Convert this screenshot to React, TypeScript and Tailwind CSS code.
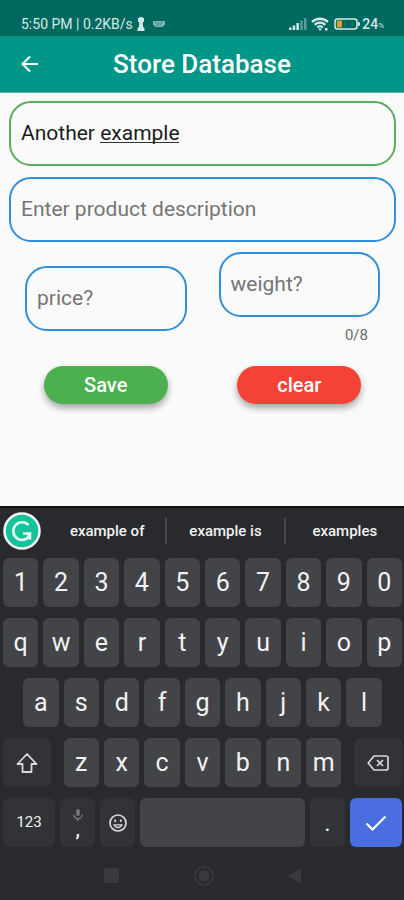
import { useState } from "react";
import clsx from "clsx";

const digits = ["1", "2", "3", "4", "5", "6", "7", "8", "9", "0"];
const topRow = ["q", "w", "e", "r", "t", "y", "u", "i", "o", "p"];
const homeRow = ["a", "s", "d", "f", "g", "h", "j", "k", "l"];
const bottomRow = ["z", "x", "c", "v", "b", "n", "m"];
const suggestions = ["example of", "example is", "examples"];

export default function App() {
  const [name, setName] = useState("Another example");

  return (
    <div className="flex min-h-screen flex-col bg-[#fafafa] font-['Roboto',sans-serif]">
      <StatusBar />

      <header className="grid h-[57px] grid-cols-[40px_1fr_40px] items-center border-b border-[#4fb3a7] bg-[#009688] px-[10px] text-white">
        <button type="button" aria-label="Back" className="flex h-10 w-10 items-center justify-center">
          <svg className="h-5 w-5" viewBox="0 0 20 20" fill="none" stroke="currentColor" strokeWidth="2">
            <path d="M18 10H3M10 2.5L2.5 10l7.5 7.5" />
          </svg>
        </button>
        <h1 className="text-center text-[26px] leading-8 font-medium">Store Database</h1>
      </header>

      <main className="flex-1 pt-2 pr-2 pl-[9px]">
        <form className="flex flex-col" onSubmit={e => e.preventDefault()}>
          <div className="relative">
            <Field
              label="Product name"
              className="border-[#58ac5b] text-[#1c1c1c]"
              value={name}
              onChange={setName}
            />
            {/* Composing underline of the word being typed */}
            {name === "Another example" && (
              <div className="absolute top-[41px] left-[91px] h-px w-[79px] bg-[#333]" />
            )}
          </div>
          <div className="mt-[11px]">
            <Field label="Enter product description" className="border-[#2f8fd8]" />
          </div>

          <div className="mt-[10px] grid grid-cols-2 items-center">
            <div className="px-4">
              <Field label="price?" className="border-[#2f8fd8]" />
            </div>
            <div className="px-4">
              <Field label="weight?" className="border-[#2f8fd8]" />
              <p className="mt-2 pr-3 text-right text-[15px] leading-5 text-[#6b6b6b]">0/8</p>
            </div>
          </div>

          <div className="mt-[21px] grid grid-cols-2">
            <button
              type="submit"
              className="mx-auto h-[38px] w-[124px] rounded-full bg-[#4caf50] text-xl font-medium text-white shadow-[0_4px_7px_rgba(0,0,0,0.35)]"
            >
              Save
            </button>
            <button
              type="reset"
              onClick={() => setName("")}
              className="mx-auto h-[38px] w-[124px] rounded-full bg-[#f44336] text-xl font-medium text-white shadow-[0_4px_7px_rgba(0,0,0,0.35)]"
            >
              clear
            </button>
          </div>
        </form>
      </main>

      <Keyboard />
    </div>
  );
}

function Field({
  label,
  className,
  value,
  onChange,
}: {
  label: string;
  className: string;
  value?: string;
  onChange?: (value: string) => void;
}) {
  return (
    <input
      type="text"
      aria-label={label}
      placeholder={label}
      value={value}
      onChange={e => onChange?.(e.target.value)}
      className={clsx(
        "block h-[65px] w-full rounded-[22px] border-2 bg-transparent px-[10px] pb-[2px] text-[21px] outline-none placeholder:text-[#757575]",
        className
      )}
    />
  );
}

function StatusBar() {
  return (
    <div className="flex h-9 items-center justify-between bg-[#00695f] pt-[11px] pr-5 pl-[21px] text-sm text-[#d5eae7]">
      <div className="flex items-center gap-1">
        <span>5:50 PM | 0.2KB/s</span>
        <svg className="h-[14px] w-2" viewBox="0 0 8 14" fill="currentColor">
          <path d="M2.500 0h3v1H7v3.500L5.700 5.500 6.200 10l1.300 1.500V14h-7v-2.500L1.800 10l.5-4.500L1 4.500V1h1.500z" />
        </svg>
        <svg className="ml-1 h-2 w-3 text-[#7fb5ae]" viewBox="0 0 12 8" fill="currentColor">
          <path d="M0 1h12v3.500L9.500 7h-7L0 4.500z" />
          <path d="M2 3h8M3.500 5h5" stroke="#00695f" strokeWidth=".7" strokeDasharray="1 .6" />
        </svg>
      </div>
      <div className="flex items-center">
        <svg className="h-3 w-[18px]" viewBox="0 0 18 12" fill="currentColor">
          <path d="M0 9.500h2.500V12H0zM3.700 7.500h2.500V12H3.700zM7.400 5h2.500v7H7.400z" />
          <path d="M11.200 2.500h2.500V12h-2.500zM15 0h2.500v12H15z" opacity=".4" />
        </svg>
        <svg className="ml-1 h-[14px] w-[18px]" viewBox="0 0 18 14" fill="none" stroke="currentColor" strokeWidth="2.300">
          <path d="M1 5a11.500 11.500 0 0 1 16 0M3.700 7.800a7.700 7.700 0 0 1 10.600 0M6.300 10.400a4 4 0 0 1 5.400 0" />
          <path d="M7 11.500h4L9 14zM14 11h2.500v2.500H14z" fill="currentColor" stroke="none" />
        </svg>
        <svg className="ml-[5px] h-3 w-[26px]" viewBox="0 0 26 12">
          <rect x="1" y="1" width="22" height="10" rx="2.500" fill="none" stroke="currentColor" strokeWidth="1.500" />
          <path d="M24 4h1l1 1v2l-1 1h-1z" fill="currentColor" />
          <rect x="3" y="2.500" width="5" height="7" rx="1" fill="#e0a030" />
        </svg>
        <span className="ml-[2px] font-medium">24</span>
        <span className="pt-1 text-[8px]">%</span>
      </div>
    </div>
  );
}

function Keyboard() {
  return (
    <footer className="border-t-2 border-[#111214] bg-[#292a2e] text-[#f1f2f4]">
      <div className="flex h-[50px] items-center pb-1 pl-[3px]">
        <button type="button" aria-label="Grammarly" className="h-[38px] w-[38px] shrink-0">
          <svg className="h-full w-full" viewBox="0 0 38 38" fill="none">
            <circle cx="19" cy="19" r="17.500" fill="#15c39a" stroke="#f5f5f5" strokeWidth="2.500" />
            <path d="M25.500 13a8.800 8.800 0 1 0 .5 11.500" stroke="#e9fbf5" strokeWidth="2.600" />
            <path d="M20 21.500h7v6" stroke="#e9fbf5" strokeWidth="2.600" />
            <path d="M22.500 21.500h5.500v5.500z" fill="#e9fbf5" />
          </svg>
        </button>
        <div className="ml-2 grid flex-1 grid-cols-3 divide-x-2 divide-[#45464a]">
          {suggestions.map(word => (
            <button key={word} type="button" className="h-[26px] text-[15px] font-medium">
              {word}
            </button>
          ))}
        </div>
      </div>

      <div className="flex flex-col gap-[11px] pr-[2px] pl-[3px]">
        <div className="grid grid-cols-20 gap-x-[5px]">
          {digits.map(k => (
            <Key key={k} label={k} />
          ))}
        </div>
        <div className="grid grid-cols-20 gap-x-[5px]">
          {topRow.map(k => (
            <Key key={k} label={k} />
          ))}
        </div>
        <div className="grid grid-cols-20 gap-x-[5px]">
          <span />
          {homeRow.map(k => (
            <Key key={k} label={k} />
          ))}
        </div>
        <div className="grid grid-cols-20 gap-x-[5px]">
          <button
            type="button"
            aria-label="Shift"
            className="col-span-3 mr-2 flex h-[49px] items-center justify-center rounded-md bg-[#323337]"
          >
            <svg className="h-[22px] w-[22px]" viewBox="0 0 22 22" fill="none" stroke="#d8d9dc" strokeWidth="1.800">
              <path d="M11 2L1.500 12H6.500V20h9v-8h5z" strokeLinejoin="round" />
            </svg>
          </button>
          {bottomRow.map(k => (
            <Key key={k} label={k} />
          ))}
          <button
            type="button"
            aria-label="Backspace"
            className="col-span-3 ml-2 flex h-[49px] items-center justify-center rounded-md bg-[#323337]"
          >
            <svg className="h-4 w-[22px]" viewBox="0 0 22 16" fill="none" stroke="#d8d9dc" strokeWidth="1.700">
              <path d="M7 1h12a2 2 0 0 1 2 2v10a2 2 0 0 1-2 2H7L1.200 8z" strokeLinejoin="round" />
              <path d="M10 5l6 6M16 5l-6 6" />
            </svg>
          </button>
        </div>
        <div className="grid grid-cols-[52fr_35fr_35fr_164fr_35fr_52fr] gap-x-[5px]">
          <button type="button" className="h-[49px] rounded-md bg-[#323337] text-[15px]">
            123
          </button>
          <button
            type="button"
            className="flex h-[49px] flex-col items-center justify-center rounded-md bg-[#323337] text-xl leading-4 font-medium"
          >
            <svg className="h-3 w-[10px]" viewBox="0 0 10 12" fill="#77787b">
              <rect x="3.200" y="0" width="3.600" height="7" rx="1.800" />
              <path d="M.8 5.500a4.200 4.200 0 0 0 8.400 0M5 9.500V12" fill="none" stroke="#77787b" strokeWidth="1.400" />
            </svg>
            ,
          </button>
          <button
            type="button"
            aria-label="Emoji"
            className="flex h-[49px] items-center justify-center rounded-md bg-[#323337]"
          >
            <svg className="h-[18px] w-[18px]" viewBox="0 0 18 18" fill="none" stroke="#d8d9dc" strokeWidth="1.700">
              <circle cx="9" cy="9" r="8" />
              <path d="M5 10.800a4.300 4.300 0 0 0 8 0z" strokeWidth="1.300" />
              <path d="M6.200 5.500v2.500M11.800 5.500v2.500" />
            </svg>
          </button>
          <button type="button" aria-label="Space" className="h-[49px] rounded-md bg-[#434448]" />
          <button type="button" className="h-[49px] rounded-md bg-[#323337] text-2xl">
            .
          </button>
          <button
            type="button"
            aria-label="Done"
            className="flex h-[49px] items-center justify-center rounded-md bg-[#4a6ee0]"
          >
            <svg className="h-4 w-[22px]" viewBox="0 0 22 16" fill="none" stroke="#fff" strokeWidth="2.200">
              <path d="M1.500 8.500L7.500 14.500L20.500 1.500" />
            </svg>
          </button>
        </div>
      </div>

      <nav className="flex h-[53px] items-center justify-center gap-[74px] pt-1 text-[#393a3d]">
        <button type="button" aria-label="Recent apps">
          <svg className="h-4 w-4" viewBox="0 0 16 16" fill="currentColor">
            <rect width="15" height="15" rx="1" />
          </svg>
        </button>
        <button type="button" aria-label="Home">
          <svg className="h-5 w-5" viewBox="0 0 20 20" fill="currentColor">
            <circle cx="10" cy="10" r="9" fill="none" stroke="currentColor" strokeWidth="1.500" />
            <circle cx="10" cy="10" r="5.500" />
          </svg>
        </button>
        <button type="button" aria-label="Back">
          <svg className="h-4 w-[13px]" viewBox="0 0 13 16" fill="currentColor">
            <path d="M13 0v16L0 8z" />
          </svg>
        </button>
      </nav>
    </footer>
  );
}

function Key({ label }: { label: string }) {
  return (
    <button type="button" className="col-span-2 h-[49px] rounded-md bg-[#434448] text-[25px]">
      {label}
    </button>
  );
}
